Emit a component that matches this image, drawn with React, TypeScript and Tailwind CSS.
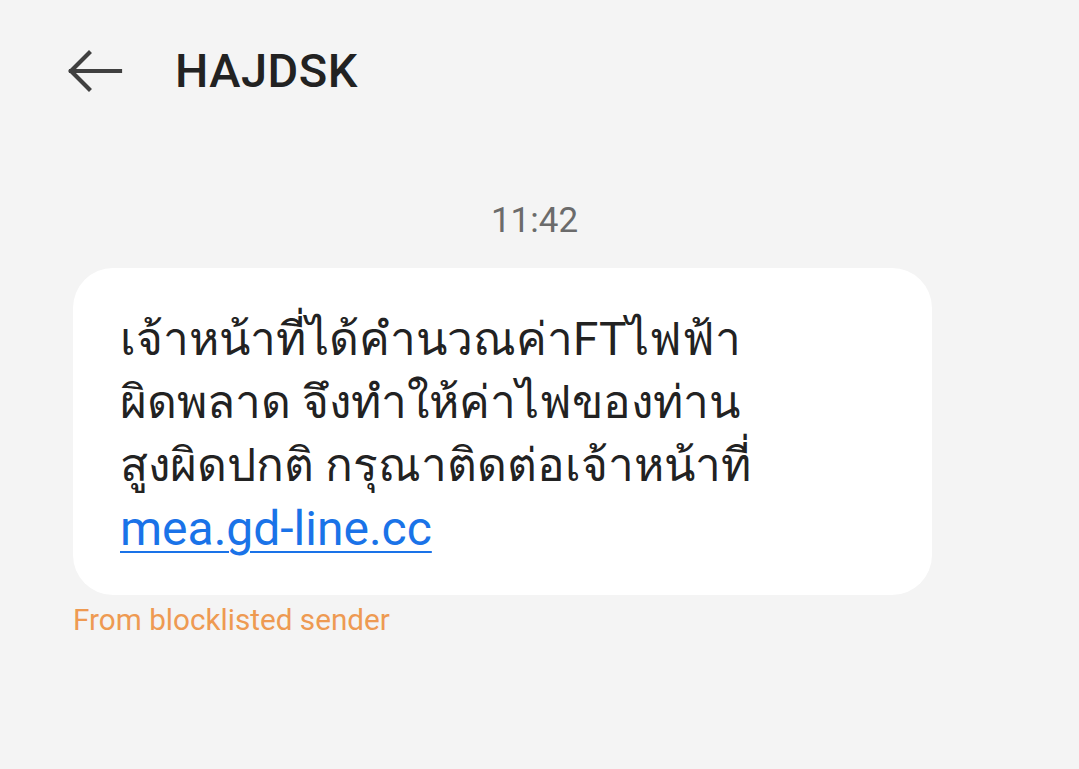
function BackArrow() {
  return (
    <svg width="56" height="44" viewBox="0 0 56 44" fill="none" stroke="#404040" strokeWidth="4.2" strokeLinecap="square">
      <path d="M4 22H53" />
      <path d="M22 4L4 22L22 40" strokeLinejoin="miter" />
    </svg>
  );
}

export default function App() {
  return (
    <div className="min-h-[769px] w-[1079px] bg-[#f4f4f4] font-['Roboto','Noto_Sans',sans-serif] text-[#222]">
      <header className="flex h-[144px] items-center pl-[67px] pb-[2px]">
        <BackArrow />
        <h1 className="ml-[52px] text-[47px] font-medium tracking-[0.5px] text-[#222]">HAJDSK</h1>
      </header>

      <div className="mt-[52px] pr-[10px] text-center text-[35px] leading-[50px] text-[#6b6b6b]">11:42</div>

      <div className="ml-[73px] mt-[22px] w-[859px] rounded-[40px] bg-white pb-[34px] pl-[47px] pt-[40px]">
        <p className="text-[46px] leading-[63px] text-[#222]">
          เจ้าหน้าที่ได้คำนวณค่าFTไฟฟ้า
          <br />
          ผิดพลาด จึงทำให้ค่าไฟของท่าน
          <br />
          สูงผิดปกติ กรุณาติดต่อเจ้าหน้าที่
          <br />
          <a href="#" className="text-[48px] text-[#1a73e8] underline decoration-[2px] underline-offset-[6px]">
            mea.gd-line.cc
          </a>
        </p>
      </div>

      <p className="ml-[73px] mt-[3px] text-[29.7px] text-[#ee9a52]">From blocklisted sender</p>
    </div>
  );
}
